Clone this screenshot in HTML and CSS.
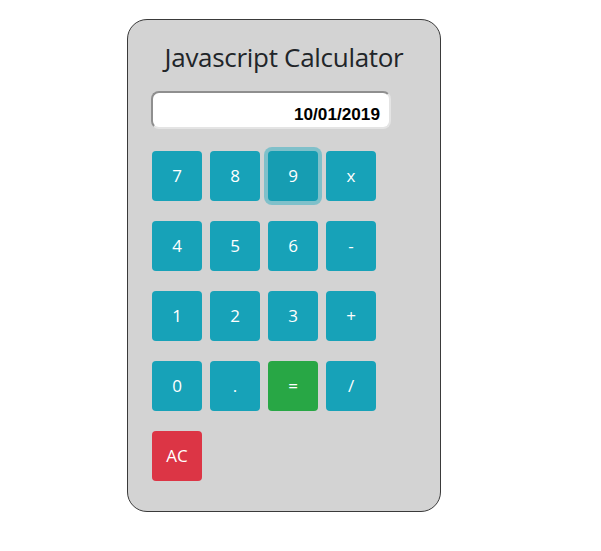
FILE: index.html
```html
<!DOCTYPE html>
<html lang="en">
<head>
<meta charset="utf-8">
<title>Javascript Calculator</title>
<link rel="stylesheet" href="styles.css">
</head>
<body>
  <div class="calculator">
    <h1 class="title">Javascript Calculator</h1>
    <div class="display">10/01/2019</div>
    <div class="keys">
      <button class="key">7</button>
      <button class="key">8</button>
      <button class="key key-focus">9</button>
      <button class="key">x</button>
      <button class="key">4</button>
      <button class="key">5</button>
      <button class="key">6</button>
      <button class="key">-</button>
      <button class="key">1</button>
      <button class="key">2</button>
      <button class="key">3</button>
      <button class="key">+</button>
      <button class="key">0</button>
      <button class="key">.</button>
      <button class="key key-equals">=</button>
      <button class="key">/</button>
      <button class="key key-clear">AC</button>
    </div>
  </div>
</body>
</html>
```

FILE: styles.css
```css
html, body {
  margin: 0;
  padding: 0;
  background: #ffffff;
}

body {
  padding: 19px 0 0 127px;
  font-family: "Open Sans", "Noto Sans", sans-serif;
  color: #212529;
}

.calculator {
  width: 312px;
  height: 491px;
  background: #d3d3d3;
  border: 1px solid #3a3a3a;
  border-radius: 20px;
  box-sizing: content-box;
}

.title {
  margin: 19px 0 0 0;
  font-size: 26px;
  font-weight: 400;
  line-height: 36px;
  letter-spacing: -0.3px;
  text-align: center;
  color: #212529;
}

.display {
  margin: 16px 0 0 23px;
  width: 240px;
  height: 38px;
  box-sizing: border-box;
  padding: 8px 9px 0 9px;
  background: #ffffff;
  border: 2px solid;
  border-color: #8f8f8f #e4e4e4 #e4e4e4 #8f8f8f;
  border-radius: 8px;
  font-family: "Liberation Sans", Arial, sans-serif;
  font-weight: 700;
  font-size: 17.2px;
  line-height: 26px;
  text-align: right;
  color: #000000;
}

.keys {
  margin: 22px 0 0 24px;
  display: grid;
  grid-template-columns: repeat(4, 50px);
  grid-auto-rows: 50px;
  column-gap: 8px;
  row-gap: 20px;
}

.key {
  width: 50px;
  height: 50px;
  padding: 0;
  border: none;
  border-radius: 4px;
  background: #17a2b8;
  color: #ffffff;
  font-family: "Open Sans", "Noto Sans", sans-serif;
  font-size: 17px;
  line-height: 50px;
  text-align: center;
}

.key-focus {
  background: #169db2;
  box-shadow: 0 0 0 4px rgba(58, 176, 195, 0.55);
}

.key-equals {
  background: #28a745;
}

.key-clear {
  background: #dc3545;
}
```
